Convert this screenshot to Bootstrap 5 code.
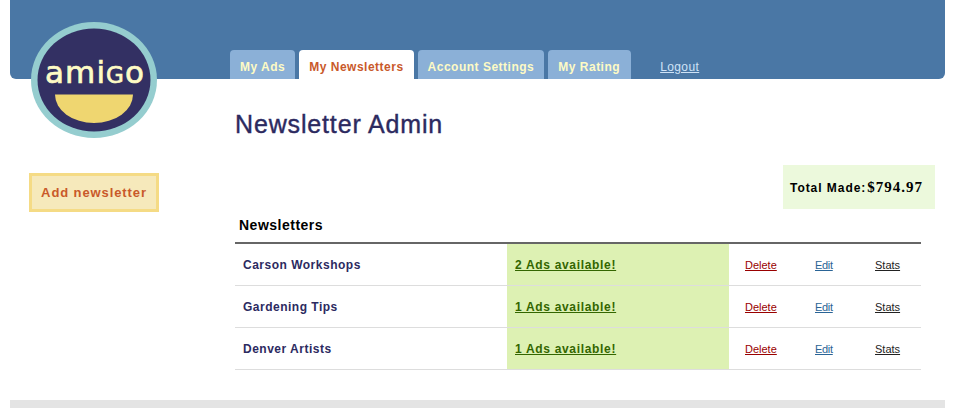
<!DOCTYPE html>
<html lang="en">
<head>
<meta charset="utf-8">
<title>Newsletter Admin</title>
<link href="https://cdn.jsdelivr.net/npm/bootstrap@5.3.0/dist/css/bootstrap.min.css" rel="stylesheet">
<style>
html,body{height:100%}
body{font-family:"Liberation Sans",Arial,sans-serif;background:#fff;color:#000;overflow:hidden}
.shell{position:relative;padding:0 10px;height:419px}
.topbar{background:#4a77a5;height:79px;border-radius:0 0 6px 6px;padding-left:220px}
.tab-link{display:block;height:29px;line-height:34px;padding:0 10px;background:#8bb0d7;color:#fefbc5;font-weight:700;font-size:12px;letter-spacing:.5px;text-decoration:none;border-radius:4px 4px 0 0}
.tab-link.current{background:#fff;color:#c9592a}
.tab-link.last-tab{padding-right:11px}
.tabs-row{gap:4px;padding-top:50px}
.logout-link{color:#cfe3f7;font-size:12px;letter-spacing:.4px;line-height:35px;margin-left:25px}
.logo-mark{position:absolute;left:31px;top:22px;width:126px;height:116px}
.logo-word{font-family:"DejaVu Sans",sans-serif;font-size:31px;fill:#fefbc5;stroke:#fefbc5;stroke-width:.7px}
.logo-cap{font-size:23px}
.content-row{height:321px}
.side-col{width:225px;flex:none;padding:94px 0 0 19px}
.add-btn{display:block;width:130px;height:39px;line-height:33px;text-align:center;background:#f6e9bb;border:3px solid #f5db85;color:#c9592a;font-weight:700;font-size:13px;letter-spacing:.9px;text-decoration:none}
.main-col{flex:1;min-width:0}
.page-title{font-family:"Liberation Sans",Arial,sans-serif;font-size:25px;font-weight:400;color:#2c2a5f;letter-spacing:.85px;line-height:30px;margin:0;padding-top:30px;-webkit-text-stroke:.4px #2c2a5f}
.total-box{background:#ecf9dc;width:152px;height:44px;margin:26px 0 0 548px;padding:0 0 0 7px;font-weight:700;font-size:12px;letter-spacing:.95px;line-height:44px;white-space:nowrap}
.total-sum{font-family:"Liberation Serif",serif;font-size:15px;letter-spacing:1px;margin-left:1px}
.news-table{width:686px;table-layout:fixed;margin:0}
.news-table>:not(caption)>*>*{padding:2px 0 0;border-bottom:1px solid #ddd;box-shadow:none;vertical-align:middle;height:42px;font-size:11px}
.news-table>thead>tr>th{height:34px;padding:0 0 0 4px;border-bottom:2px solid #666;font-size:14px;letter-spacing:.5px;font-weight:700;color:#000}
.news-table>tbody{border-top:0}
.news-name{padding-left:8px!important;font-weight:700;font-size:12px!important;letter-spacing:.5px;color:#2c2a5f!important}
.news-ads{background:#ddf1b3!important;--bs-table-bg:#ddf1b3;padding-left:8px!important}
.news-ads a{color:#336600;font-weight:700;font-size:12px;letter-spacing:.68px}
.act-del{color:#990000}
.act-edit{color:#2a6496;letter-spacing:-.3px}
.act-stats{color:#222}
.footbar{height:8px;background:#e4e4e4}
</style>
</head>
<body>
<div class="shell">
  <div class="topbar">
    <nav class="d-flex align-items-start tabs-row">
      <a class="tab-link" href="#">My Ads</a>
      <a class="tab-link current" href="#">My Newsletters</a>
      <a class="tab-link" href="#">Account Settings</a>
      <a class="tab-link last-tab" href="#">My Rating</a>
      <a class="logout-link" href="#">Logout</a>
    </nav>
  </div>
  <svg class="logo-mark" viewBox="0 0 126 116" aria-label="amigo logo">
    <ellipse cx="63" cy="58" rx="63" ry="58" fill="#95cdcf"/>
    <ellipse cx="63" cy="58" rx="56.500" ry="51.500" fill="#333063"/>
    <path d="M24 72.500H102A39 28.500 0 0 1 24 72.500Z" fill="#efd670"/>
    <text class="logo-word" x="14" y="61" textLength="99" lengthAdjust="spacing">ami<tspan class="logo-cap">G</tspan>o</text>
  </svg>
  <div class="d-flex content-row">
    <aside class="side-col">
      <a class="add-btn" href="#">Add newsletter</a>
    </aside>
    <main class="main-col">
      <h1 class="page-title">Newsletter Admin</h1>
      <div class="total-box">Total Made:<span class="total-sum">$794.97</span></div>
      <table class="table news-table">
        <colgroup><col style="width:272px"><col style="width:222px"><col style="width:70px"><col style="width:60px"><col style="width:62px"></colgroup>
        <thead><tr><th colspan="5">Newsletters</th></tr></thead>
        <tbody>
          <tr><td class="news-name">Carson Workshops</td><td class="news-ads"><a href="#">2 Ads available!</a></td><td class="ps-3"><a class="act-del" href="#">Delete</a></td><td class="ps-3"><a class="act-edit" href="#">Edit</a></td><td class="ps-3"><a class="act-stats" href="#">Stats</a></td></tr>
          <tr><td class="news-name">Gardening Tips</td><td class="news-ads"><a href="#">1 Ads available!</a></td><td class="ps-3"><a class="act-del" href="#">Delete</a></td><td class="ps-3"><a class="act-edit" href="#">Edit</a></td><td class="ps-3"><a class="act-stats" href="#">Stats</a></td></tr>
          <tr><td class="news-name">Denver Artists</td><td class="news-ads"><a href="#">1 Ads available!</a></td><td class="ps-3"><a class="act-del" href="#">Delete</a></td><td class="ps-3"><a class="act-edit" href="#">Edit</a></td><td class="ps-3"><a class="act-stats" href="#">Stats</a></td></tr>
        </tbody>
      </table>
    </main>
  </div>
  <div class="footbar"></div>
</div>
<script src="https://cdn.jsdelivr.net/npm/bootstrap@5.3.0/dist/js/bootstrap.bundle.min.js"></script>
</body>
</html>
